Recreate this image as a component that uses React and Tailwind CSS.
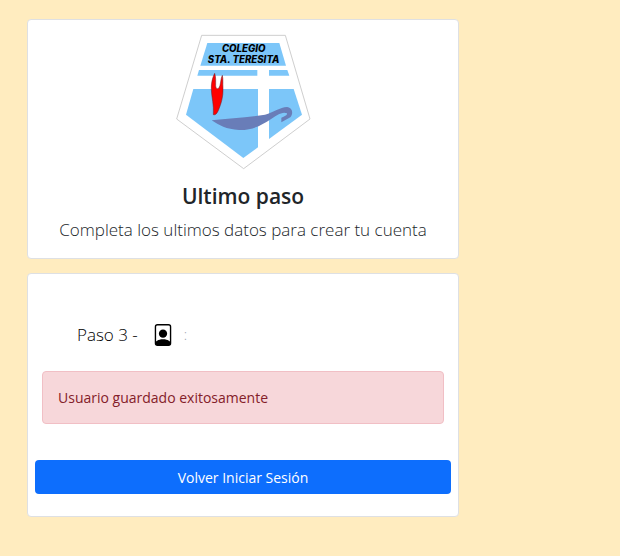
import React from 'react';
import { BsFilePerson } from 'react-icons/bs';

function SchoolLogo() {
  return (
    <svg viewBox="30 27 408 408" className="w-[136px] h-[136px]" role="img" aria-label="Colegio Sta. Teresita">
      <path d="M110 31H361L435 282L236 431L35 282Z" fill="#fff" stroke="#c4c4c4" strokeWidth="2.5" />
      {/* blue fields */}
      <g fill="#7cc6f9">
        <path d="M127 54H343L363 122H106Z" />
        <path d="M102 135H277V152H97Z" />
        <path d="M312 135H367L373 152H312Z" />
        <path d="M85 192H279V367L235 399L63 269Z" />
        <path d="M312 192H386L411 269L312 342Z" />
      </g>
      {/* flame */}
      <path
        d="M149 145C143 156 138 174 139 194C140 218 147 239 145 269C152 271 157 264 161 254C168 237 175 216 174 190C173 174 175 163 172 151C166 162 168 181 161 190C156 193 152 189 152 182C152 168 153 158 149 145Z"
        fill="#f00"
        stroke="#5c2430"
        strokeWidth="1.5"
      />
      {/* oil lamp */}
      <path
        d="M140 286C190 280 250 277 300 269C326 263 345 246 366 246C384 248 385 267 376 277L349 292V278C359 273 367 271 366 265C352 258 334 272 315 284C292 298 266 316 222 315C184 313 162 301 140 286Z"
        fill="#697db8"
      />
      <g
        className="[font-optical-sizing:none]"
        fontFamily="Inter, sans-serif"
        fontSize="29"
        fontWeight="800"
        fontStyle="italic"
        textAnchor="middle"
        fill="#000"
      >
        <text x="236" y="82">COLEGIO</text>
        <text x="236" y="115">STA. TERESITA</text>
      </g>
    </svg>
  );
}

function Card({ children, className }) {
  return (
    <section className={`bg-white border border-[#dee0e3] rounded ${className}`}>
      {children}
    </section>
  );
}

function App() {
  return (
    <main className="min-h-screen bg-[#ffecbf] text-[#212529] font-['Open_Sans','Noto_Sans',sans-serif] px-[27px] py-[19px]">
      <div className="w-full max-w-[432px] flex flex-col gap-[14px]">
        <Card className="flex flex-col items-center text-center px-4 pt-[14px] pb-[14px]">
          <SchoolLogo />
          <h1 className="mt-3 text-[21px] leading-7 font-semibold">Ultimo paso</h1>
          <p className="mt-[6px] text-[17px] leading-7 font-light">Completa los ultimos datos para crear tu cuenta</p>
        </Card>

        <Card className="px-[7px] pt-12 pb-[22px]">
          <div className="flex items-center h-[26px] pl-[42px] text-[17px]">
            <h2 className="font-light text-black">Paso 3 -</h2>
            <BsFilePerson className="ml-[14px] size-[22px] text-black" aria-hidden="true" />
            <span className="ml-[10px] text-sm font-light text-gray-400">:</span>
          </div>

          <div
            role="alert"
            className="mt-[23px] mx-[7px] px-[15px] py-4 border border-[#f1bfc5] rounded bg-[#f7d7da] text-[#842029] text-[14px] leading-[19px]"
          >
            Usuario guardado exitosamente
          </div>

          <button
            type="button"
            className="mt-9 w-full h-[34px] rounded bg-[#0d6efd] text-white text-[14px] hover:bg-[#0b5ed7]"
          >
            Volver Iniciar Sesión
          </button>
        </Card>
      </div>
    </main>
  );
}

export default App;
